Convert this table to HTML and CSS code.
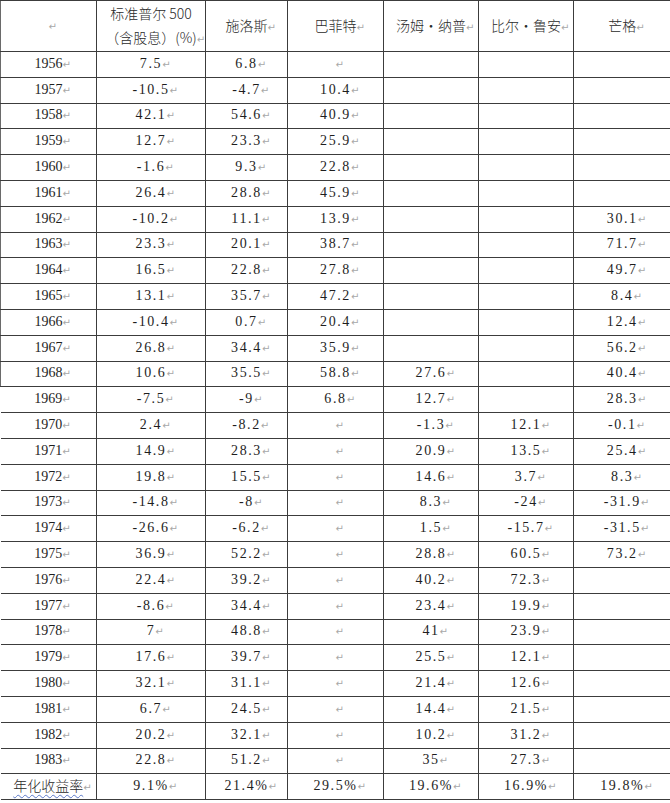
FILE: index.html
```html
<!DOCTYPE html>
<html lang="zh-CN">
<head>
<meta charset="utf-8">
<title>收益率对比</title>
<link rel="stylesheet" href="styles.css">
</head>
<body>
<table class="grid">
<colgroup>
<col class="c-year"><col class="c-sp"><col class="c-sch"><col class="c-buf"><col class="c-kn"><col class="c-ru"><col class="c-mu">
</colgroup>
<thead>
<tr class="head lb">
<th><i class="m">↵</i></th>
<th><span class="cn">标准普尔 500</span><br><span class="cn">（含股息）(%)</span><i class="m">↵</i></th>
<th><span class="cn">施洛斯</span><i class="m">↵</i></th>
<th><span class="cn">巴菲特</span><i class="m">↵</i></th>
<th><span class="cn">汤姆·纳普</span><i class="m">↵</i></th>
<th><span class="cn">比尔·鲁安</span><i class="m">↵</i></th>
<th><span class="cn">芒格</span><i class="m">↵</i></th>
</tr>
</thead>
<tbody>
<tr class="lb"><td>1956<i class="m">↵</i></td><td>7.5<i class="m">↵</i></td><td>6.8<i class="m">↵</i></td><td><i class="m">↵</i></td><td></td><td></td><td></td></tr>
<tr class="lb"><td>1957<i class="m">↵</i></td><td>-10.5<i class="m">↵</i></td><td>-4.7<i class="m">↵</i></td><td>10.4<i class="m">↵</i></td><td></td><td></td><td></td></tr>
<tr class="lb"><td>1958<i class="m">↵</i></td><td>42.1<i class="m">↵</i></td><td>54.6<i class="m">↵</i></td><td>40.9<i class="m">↵</i></td><td></td><td></td><td></td></tr>
<tr class="lb"><td>1959<i class="m">↵</i></td><td>12.7<i class="m">↵</i></td><td>23.3<i class="m">↵</i></td><td>25.9<i class="m">↵</i></td><td></td><td></td><td></td></tr>
<tr class="lb"><td>1960<i class="m">↵</i></td><td>-1.6<i class="m">↵</i></td><td>9.3<i class="m">↵</i></td><td>22.8<i class="m">↵</i></td><td></td><td></td><td></td></tr>
<tr class="lb"><td>1961<i class="m">↵</i></td><td>26.4<i class="m">↵</i></td><td>28.8<i class="m">↵</i></td><td>45.9<i class="m">↵</i></td><td></td><td></td><td></td></tr>
<tr class="lb"><td>1962<i class="m">↵</i></td><td>-10.2<i class="m">↵</i></td><td>11.1<i class="m">↵</i></td><td>13.9<i class="m">↵</i></td><td></td><td></td><td>30.1<i class="m">↵</i></td></tr>
<tr class="lb"><td>1963<i class="m">↵</i></td><td>23.3<i class="m">↵</i></td><td>20.1<i class="m">↵</i></td><td>38.7<i class="m">↵</i></td><td></td><td></td><td>71.7<i class="m">↵</i></td></tr>
<tr class="lb"><td>1964<i class="m">↵</i></td><td>16.5<i class="m">↵</i></td><td>22.8<i class="m">↵</i></td><td>27.8<i class="m">↵</i></td><td></td><td></td><td>49.7<i class="m">↵</i></td></tr>
<tr class="lb"><td>1965<i class="m">↵</i></td><td>13.1<i class="m">↵</i></td><td>35.7<i class="m">↵</i></td><td>47.2<i class="m">↵</i></td><td></td><td></td><td>8.4<i class="m">↵</i></td></tr>
<tr class="lb"><td>1966<i class="m">↵</i></td><td>-10.4<i class="m">↵</i></td><td>0.7<i class="m">↵</i></td><td>20.4<i class="m">↵</i></td><td></td><td></td><td>12.4<i class="m">↵</i></td></tr>
<tr class="lb"><td>1967<i class="m">↵</i></td><td>26.8<i class="m">↵</i></td><td>34.4<i class="m">↵</i></td><td>35.9<i class="m">↵</i></td><td></td><td></td><td>56.2<i class="m">↵</i></td></tr>
<tr class="lb"><td>1968<i class="m">↵</i></td><td>10.6<i class="m">↵</i></td><td>35.5<i class="m">↵</i></td><td>58.8<i class="m">↵</i></td><td>27.6<i class="m">↵</i></td><td></td><td>40.4<i class="m">↵</i></td></tr>
<tr><td>1969<i class="m">↵</i></td><td>-7.5<i class="m">↵</i></td><td>-9<i class="m">↵</i></td><td>6.8<i class="m">↵</i></td><td>12.7<i class="m">↵</i></td><td></td><td>28.3<i class="m">↵</i></td></tr>
<tr><td>1970<i class="m">↵</i></td><td>2.4<i class="m">↵</i></td><td>-8.2<i class="m">↵</i></td><td><i class="m">↵</i></td><td>-1.3<i class="m">↵</i></td><td>12.1<i class="m">↵</i></td><td>-0.1<i class="m">↵</i></td></tr>
<tr><td>1971<i class="m">↵</i></td><td>14.9<i class="m">↵</i></td><td>28.3<i class="m">↵</i></td><td><i class="m">↵</i></td><td>20.9<i class="m">↵</i></td><td>13.5<i class="m">↵</i></td><td>25.4<i class="m">↵</i></td></tr>
<tr><td>1972<i class="m">↵</i></td><td>19.8<i class="m">↵</i></td><td>15.5<i class="m">↵</i></td><td><i class="m">↵</i></td><td>14.6<i class="m">↵</i></td><td>3.7<i class="m">↵</i></td><td>8.3<i class="m">↵</i></td></tr>
<tr><td>1973<i class="m">↵</i></td><td>-14.8<i class="m">↵</i></td><td>-8<i class="m">↵</i></td><td><i class="m">↵</i></td><td>8.3<i class="m">↵</i></td><td>-24<i class="m">↵</i></td><td>-31.9<i class="m">↵</i></td></tr>
<tr><td>1974<i class="m">↵</i></td><td>-26.6<i class="m">↵</i></td><td>-6.2<i class="m">↵</i></td><td><i class="m">↵</i></td><td>1.5<i class="m">↵</i></td><td>-15.7<i class="m">↵</i></td><td>-31.5<i class="m">↵</i></td></tr>
<tr><td>1975<i class="m">↵</i></td><td>36.9<i class="m">↵</i></td><td>52.2<i class="m">↵</i></td><td><i class="m">↵</i></td><td>28.8<i class="m">↵</i></td><td>60.5<i class="m">↵</i></td><td>73.2<i class="m">↵</i></td></tr>
<tr><td>1976<i class="m">↵</i></td><td>22.4<i class="m">↵</i></td><td>39.2<i class="m">↵</i></td><td><i class="m">↵</i></td><td>40.2<i class="m">↵</i></td><td>72.3<i class="m">↵</i></td><td></td></tr>
<tr><td>1977<i class="m">↵</i></td><td>-8.6<i class="m">↵</i></td><td>34.4<i class="m">↵</i></td><td><i class="m">↵</i></td><td>23.4<i class="m">↵</i></td><td>19.9<i class="m">↵</i></td><td></td></tr>
<tr><td>1978<i class="m">↵</i></td><td>7<i class="m">↵</i></td><td>48.8<i class="m">↵</i></td><td><i class="m">↵</i></td><td>41<i class="m">↵</i></td><td>23.9<i class="m">↵</i></td><td></td></tr>
<tr><td>1979<i class="m">↵</i></td><td>17.6<i class="m">↵</i></td><td>39.7<i class="m">↵</i></td><td><i class="m">↵</i></td><td>25.5<i class="m">↵</i></td><td>12.1<i class="m">↵</i></td><td></td></tr>
<tr><td>1980<i class="m">↵</i></td><td>32.1<i class="m">↵</i></td><td>31.1<i class="m">↵</i></td><td><i class="m">↵</i></td><td>21.4<i class="m">↵</i></td><td>12.6<i class="m">↵</i></td><td></td></tr>
<tr><td>1981<i class="m">↵</i></td><td>6.7<i class="m">↵</i></td><td>24.5<i class="m">↵</i></td><td><i class="m">↵</i></td><td>14.4<i class="m">↵</i></td><td>21.5<i class="m">↵</i></td><td></td></tr>
<tr><td>1982<i class="m">↵</i></td><td>20.2<i class="m">↵</i></td><td>32.1<i class="m">↵</i></td><td><i class="m">↵</i></td><td>10.2<i class="m">↵</i></td><td>31.2<i class="m">↵</i></td><td></td></tr>
<tr><td>1983<i class="m">↵</i></td><td>22.8<i class="m">↵</i></td><td>51.2<i class="m">↵</i></td><td><i class="m">↵</i></td><td>35<i class="m">↵</i></td><td>27.3<i class="m">↵</i></td><td></td></tr>
<tr class="total"><td><span class="cn wavy">年化收益率</span><i class="m">↵</i></td><td>9.1%<i class="m">↵</i></td><td>21.4%<i class="m">↵</i></td><td>29.5%<i class="m">↵</i></td><td>19.6%<i class="m">↵</i></td><td>16.9%<i class="m">↵</i></td><td>19.8%<i class="m">↵</i></td></tr>
</tbody>
</table>
</body>
</html>
```
FILE: styles.css
```css
html, body {
  margin: 0;
  padding: 0;
  background: #ffffff;
}

.grid {
  border-collapse: collapse;
  table-layout: fixed;
  width: 670px;
  font-family: "Liberation Serif", "Noto Sans CJK SC", serif;
  font-size: 14px;
  color: #1e1e1e;
}

.c-year { width: 96px; }
.c-sp { width: 109px; }
.c-sch { width: 82px; }
.c-buf { width: 96px; }
.c-kn { width: 95px; }
.c-ru { width: 95px; }
.c-mu { width: 97px; }

.grid th,
.grid td {
  padding: 0;
  text-align: center;
  vertical-align: middle;
  white-space: nowrap;
  border-top: 1px solid #3c3c3c;
  border-bottom: 1px solid #3c3c3c;
  border-left: 1px solid #3c3c3c;
  border-right: 1px solid #3c3c3c;
  line-height: 16px;
}

.grid tbody td + td {
  letter-spacing: 1.6px;
}

.grid th:first-child,
.grid td:first-child {
  border-left: none;
}

.grid tr.lb th:first-child,
.grid tr.lb td:first-child {
  border-left: 1px solid #6a6a6a;
}

.grid th:last-child,
.grid td:last-child {
  border-right: none;
}

.head th {
  height: 50px;
  font-weight: normal;
  line-height: 23px;
}

.grid tbody tr {
  height: 25.8px;
}

.cn {
  font-family: "Noto Sans CJK SC", sans-serif;
  font-weight: 300;
  color: #2a2a2a;
}

.wavy {
  text-decoration: underline wavy #5a78c8;
  text-decoration-thickness: 1px;
  text-underline-offset: 3px;
}

.m {
  display: inline-block;
  width: 0;
  font-style: normal;
  font-family: "DejaVu Sans", sans-serif;
  font-size: 10px;
  letter-spacing: 0;
  color: #a8a8a8;
  overflow: visible;
  text-align: left;
}
```
